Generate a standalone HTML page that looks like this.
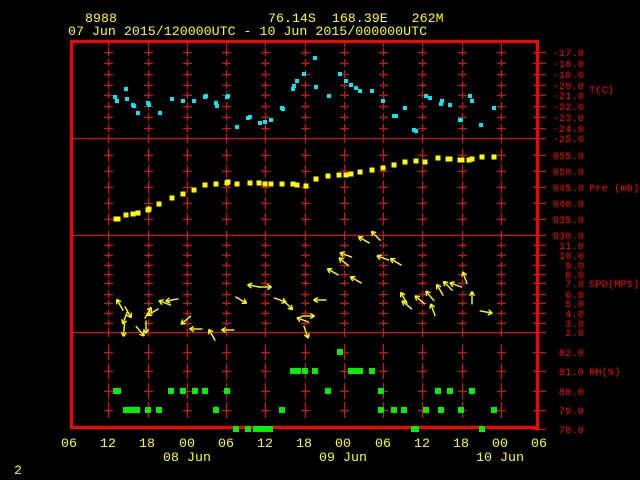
<!DOCTYPE html>
<html><head><meta charset="utf-8"><style>
html,body{margin:0;padding:0;background:#000;width:640px;height:480px;overflow:hidden}
svg{display:block}
text{font-family:"Liberation Mono",monospace;white-space:pre}
.t{fill:#ffff00;font-size:13.3px}
.r{fill:#ff0000;font-size:10.5px}
</style></head><body>
<svg id="s" width="640" height="480" viewBox="0 0 640 480" xmlns="http://www.w3.org/2000/svg" xml:space="preserve">
<rect width="640" height="480" fill="#000"/>
<g id="g"></g>
<text class="t" x="85" y="22">8988</text>
<text class="t" x="268" y="22">76.14S  168.39E   262M</text>
<text class="t" x="68" y="35">07 Jun 2015/120000UTC - 10 Jun 2015/000000UTC</text>
<g class="r" text-anchor="end">
<text x="584" y="56">-17.0</text><text x="584" y="67">-18.0</text><text x="584" y="78">-19.0</text><text x="584" y="89">-20.0</text><text x="584" y="99">-21.0</text><text x="584" y="110">-22.0</text><text x="584" y="121">-23.0</text><text x="584" y="132">-24.0</text><text x="584" y="142">-25.0</text>
<text x="584" y="159">955.0</text><text x="584" y="175">950.0</text><text x="584" y="191">945.0</text><text x="584" y="207">940.0</text><text x="584" y="223">935.0</text><text x="584" y="239">930.0</text>
<text x="584" y="249">11.0</text><text x="584" y="259">10.0</text><text x="584" y="269">9.0</text><text x="584" y="278">8.0</text><text x="584" y="287">7.0</text><text x="584" y="298">6.0</text><text x="584" y="307">5.0</text><text x="584" y="317">4.0</text><text x="584" y="327">3.0</text><text x="584" y="336">2.0</text>
<text x="584" y="356">82.0</text><text x="584" y="375">81.0</text><text x="584" y="395">80.0</text><text x="584" y="414">79.0</text><text x="584" y="433">78.0</text>
</g>
<g class="r">
<text x="589" y="93">T(C)</text>
<text x="589" y="191">Pre (mb)</text>
<text x="589" y="287">SPD(MPS)</text>
<text x="589" y="375">RH(%)</text>
</g>
<g class="t" text-anchor="middle">
<text x="69" y="447">06</text><text x="108" y="447">12</text><text x="147" y="447">18</text><text x="187" y="447">00</text><text x="226" y="447">06</text><text x="265" y="447">12</text><text x="304" y="447">18</text><text x="343" y="447">00</text><text x="383" y="447">06</text><text x="422" y="447">12</text><text x="461" y="447">18</text><text x="500" y="447">00</text><text x="539" y="447">06</text>
<text x="187" y="461">08 Jun</text><text x="343" y="461">09 Jun</text><text x="500" y="461">10 Jun</text>
</g>
<text class="t" x="14" y="474">2</text>
</svg>
<script>
var g=document.getElementById('g'),h='';
function L(x1,y1,x2,y2,c,w){h+='<line x1="'+x1+'" y1="'+y1+'" x2="'+x2+'" y2="'+y2+'" stroke="'+c+'" stroke-width="'+(w||1)+'"/>';}
function R(x,y,w,hh,c){h+='<rect x="'+x+'" y="'+y+'" width="'+w+'" height="'+hh+'" fill="'+c+'"/>';}
var cols=[];for(var k=0;k<11;k++)cols.push(Math.round(108.3+39.25*k)+0.5);
var lv={T:[52,63,74,85,95,106,117,128],P:[155,171,187,203,219],S:[245,255,265,274,283,294,303,313,323],H:[352,371,391,410]};
var all=[52,63,74,85,95,106,117,128,138,155,171,187,203,219,235,245,255,265,274,283,294,303,313,323,332,352,371,391,410,429];
['T','P','S','H'].forEach(function(p){var a=lv[p];var sp=a.length>1?a[1]-a[0]:10;
cols.forEach(function(x){a.forEach(function(y){L(x,y-sp/2+1.5,x,y+sp/2-1.5,'#f00');L(x-4.5,y+0.5,x+4.5,y+0.5,'#f00');});});});
cols.forEach(function(x){[138,235,332].forEach(function(y){L(x,y-4,x,y+5,'#f00');});L(x,43,x,47,'#f00');});
L(72,138.5,538,138.5,'#f00');L(72,235.5,538,235.5,'#f00');L(72,332.5,538,332.5,'#f00');
all.forEach(function(y){L(533,y+0.5,546,y+0.5,'#f00');});
h+='<rect x="71.5" y="41.5" width="466" height="386" fill="none" stroke="#f00" stroke-width="3"/>';
[[115,97],[117,101],[126,89],[127,99],[133,105],[134,106],[138,113],[148,103],[149,105],[160,113],[172,99],[183,101],[194,101],[205,97],[206,96],[216,103],[217,106],[227,97],[228,96],[237,127],[248,118],[250,117],[260,123],[265,122],[271,120],[282,108],[283,109],[293,89],[294,86],[297,81],[304,74],[315,58],[316,87],[329,96],[340,74],[346,81],[351,85],[356,88],[360,91],[372,91],[383,101],[394,116],[396,116],[405,108],[414,130],[416,131],[426,96],[430,98],[441,104],[442,101],[450,105],[460,120],[461,120],[470,96],[472,101],[481,125],[494,108]].forEach(function(p){R(p[0]-2,p[1]-2,4,4,'#00e8f0');});
[[116,219],[118,219],[126,215],[133,214],[138,213],[148,210],[149,209],[159,204],[172,198],[183,194],[194,190],[205,185],[216,184],[227,183],[228,182],[237,184],[250,183],[259,183],[265,184],[271,184],[282,184],[293,184],[297,185],[306,186],[316,179],[328,176],[339,175],[346,175],[351,174],[360,172],[372,170],[383,168],[394,165],[405,162],[416,161],[425,162],[438,158],[448,159],[450,159],[460,160],[462,160],[469,160],[472,159],[482,157],[494,157]].forEach(function(p){R(p[0]-2.5,p[1]-2.5,5,5,'#ffff00');});
var rh={391:[116,118,171,183,195,205,227,328,381,438,450,472],410:[126,130,133,137,148,159,216,282,381,394,404,426,441,461,494],429:[236,248,256,259,264,270,414,416,482],371:[293,296,298,305,315,351,355,360,372],352:[340]};
for(var y in rh)rh[y].forEach(function(x){R(x-3,+y-3,6,6,'#00f000');});
var W=[[120,305,-120],[125,318,110],[124,330,95],[128,312,60],[148,313,-60],[146,327,90],[140,331,50],[165,303,-160],[172,300,170],[153,312,150],[186,320,140],[196,329,180],[212,335,-120],[228,330,180],[241,300,30],[254,286,-170],[265,287,0],[280,300,20],[288,305,45],[303,320,-160],[308,316,0],[306,332,70],[320,300,180],[333,272,-150],[346,255,-160],[344,262,-140],[356,280,-150],[364,240,-150],[376,236,-135],[383,258,-160],[396,262,-150],[404,298,-120],[407,305,-140],[420,300,-140],[433,310,-110],[430,296,-130],[440,290,-120],[448,286,-135],[456,285,-160],[465,278,-110],[472,298,-90],[486,312,10]];
W.forEach(function(a){var r=a[2]*Math.PI/180,l=13,x0=a[0]-Math.cos(r)*l/2,y0=a[1]-Math.sin(r)*l/2,x1=a[0]+Math.cos(r)*l/2,y1=a[1]+Math.sin(r)*l/2;
L(x0,y0,x1,y1,'#ffff00',1.4);[2.6,-2.6].forEach(function(d){L(x1,y1,x1-Math.cos(r+d)*-5,y1-Math.sin(r+d)*-5,'#ffff00',1.4);});});
g.innerHTML=h;
</script>
</body></html>
